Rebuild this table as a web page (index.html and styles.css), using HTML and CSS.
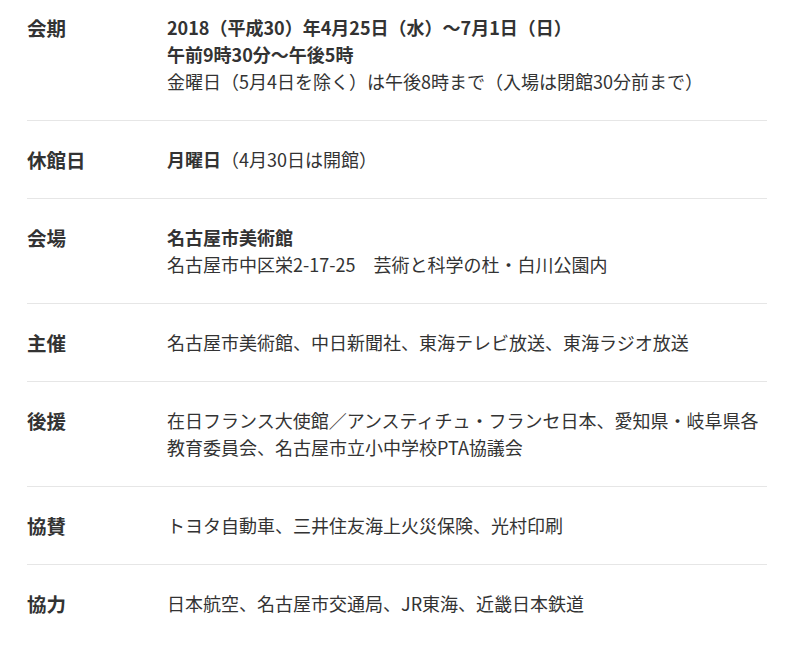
FILE: index.html
```html
<!DOCTYPE html>
<html lang="ja">
<head>
<meta charset="utf-8">
<link rel="stylesheet" href="styles.css">
</head>
<body>
<dl class="info">
  <div class="row first">
    <dt class="label">会期</dt>
    <dd class="value">
      <strong>2018（平成30）年4月25日（水）～7月1日（日）<br>午前9時30分～午後5時</strong><br>
      金曜日（5月4日を除く）は午後8時まで（入場は閉館30分前まで）
    </dd>
  </div>
  <div class="row">
    <dt class="label">休館日</dt>
    <dd class="value"><strong>月曜日</strong>（4月30日は開館）</dd>
  </div>
  <div class="row">
    <dt class="label">会場</dt>
    <dd class="value"><strong>名古屋市美術館</strong><br>名古屋市中区栄2-17-25　芸術と科学の杜・白川公園内</dd>
  </div>
  <div class="row">
    <dt class="label">主催</dt>
    <dd class="value">名古屋市美術館、中日新聞社、東海テレビ放送、東海ラジオ放送</dd>
  </div>
  <div class="row">
    <dt class="label">後援</dt>
    <dd class="value">在日フランス大使館／アンスティチュ・フランセ日本、愛知県・岐阜県各教育委員会、名古屋市立小中学校PTA協議会</dd>
  </div>
  <div class="row">
    <dt class="label">協賛</dt>
    <dd class="value">トヨタ自動車、三井住友海上火災保険、光村印刷</dd>
  </div>
  <div class="row last">
    <dt class="label">協力</dt>
    <dd class="value">日本航空、名古屋市交通局、JR東海、近畿日本鉄道</dd>
  </div>
</dl>
</body>
</html>
```
FILE: styles.css
```css
html, body {
  margin: 0;
  padding: 0;
  background: #ffffff;
}
body {
  font-family: "Noto Sans CJK JP", "Noto Sans", sans-serif;
  font-size: 18px;
  line-height: 27px;
  color: #333333;
}
.info {
  margin: 0 0 0 27px;
  width: 740px;
}
.row {
  display: flex;
  padding: 25px 0 25px;
  border-bottom: 1px solid #e6e6e6;
}
.row.first {
  padding-top: 14px;
}
.row.last {
  border-bottom: none;
}
.label {
  flex: 0 0 140px;
  margin: 0;
  font-size: 19.5px;
  font-weight: 700;
}
.value {
  flex: 1;
  margin: 0;
}
.value strong {
  font-weight: 700;
}
```
